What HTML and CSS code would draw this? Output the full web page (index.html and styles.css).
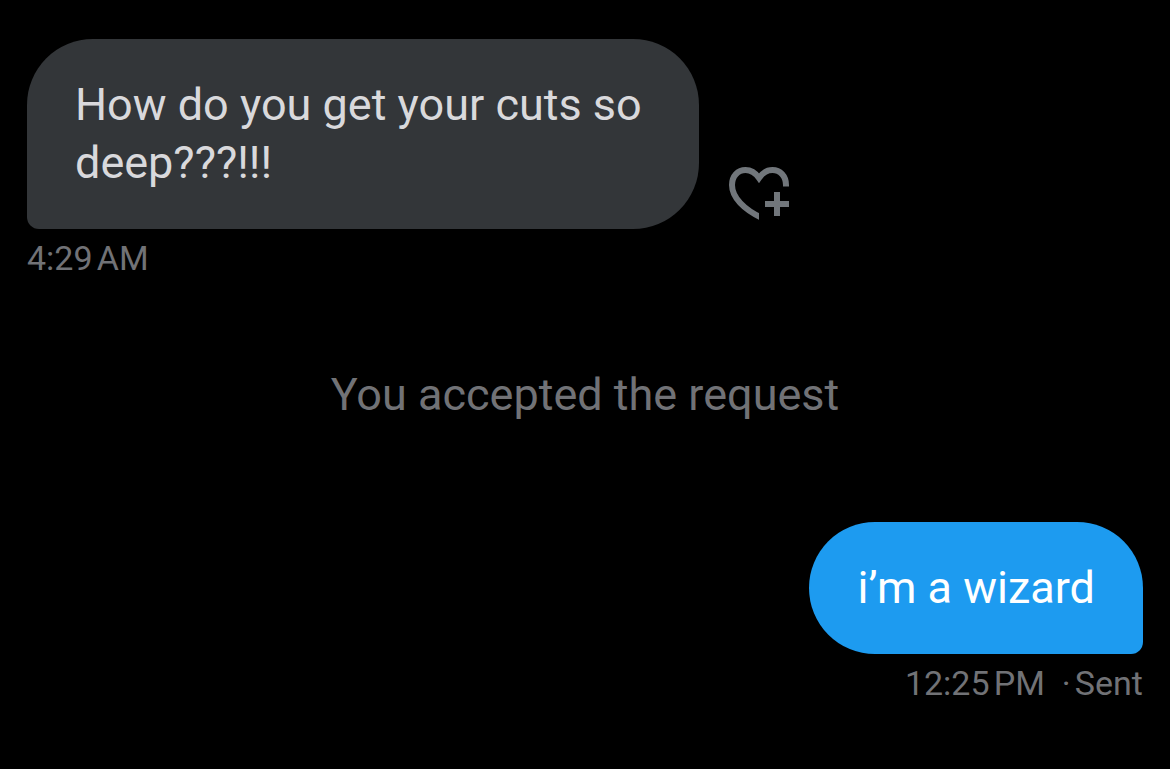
FILE: index.html
```html
<!DOCTYPE html>
<html lang="en">
<head>
  <meta charset="UTF-8">
  <meta name="viewport" content="width=device-width, initial-scale=1.0">
  <title>Messages</title>
  <link rel="stylesheet" href="styles.css">
</head>
<body>

  <main class="conversation">
    <div class="message received">
      <div class="message-row">
        <p class="bubble">How do you get your cuts so deep???!!!</p>
        <button type="button" class="react" aria-label="Add reaction">
          <svg width="60" height="54" viewBox="0 0 60 54" fill="none" stroke="currentColor" stroke-width="6">
            <clipPath id="heartClip">
              <path d="M0 0H60V19.500H30V54H0Z"/>
            </clipPath>
            <path clip-path="url(#heartClip)" d="M57 22V18C57 9 51 3 43.500 3C38 3 33.500 6 30 11C26.500 6 22 3 16.500 3C9 3 3 9 3 18C3 30.500 15 42.500 33 51"/>
            <path d="M36 37H60M48 25V49"/>
          </svg>
        </button>
      </div>
      <p class="meta">4:29&#8239;AM</p>
    </div>

    <p class="notice">You accepted the request</p>

    <div class="message sent">
      <div class="message-row">
        <p class="bubble">i’m a wizard</p>
      </div>
      <p class="meta">12:25&#8239;PM &nbsp;·&#8239;Sent</p>
    </div>
  </main>

</body>
</html>
```
FILE: styles.css
```css
* {
  box-sizing: border-box;
}
body {
  margin: 0;
  background-color: #000;
  font-family: Roboto, "Liberation Sans", sans-serif;
  font-size: 45px;
  line-height: 58px;
}
p {
  margin: 0;
}
.conversation {
  display: flex;
  flex-direction: column;
  padding: 39px 27px;
}
.message {
  display: flex;
  flex-direction: column;
  align-items: flex-start;
}
.message-row {
  display: flex;
  align-items: flex-end;
  gap: 30px;
}
.bubble {
  max-width: 672px;
  padding: 37px 48px;
  border-radius: 66px;
}
.received .bubble {
  background-color: #333639;
  color: #d9d9dc;
  border-bottom-left-radius: 12px;
}
.sent {
  align-items: flex-end;
}
.sent .bubble {
  background-color: #1d9bf0;
  color: #fff;
  border-bottom-right-radius: 12px;
}
.meta {
  margin-top: 8px;
  color: #717276;
  font-size: 34px;
  line-height: 42px;
}
.react {
  display: flex;
  margin-bottom: 8px;
  padding: 0;
  border: none;
  background: none;
  color: #71767b;
  cursor: pointer;
}
.notice {
  margin: 87px 0 98px;
  color: #717276;
  text-align: center;
}
```
